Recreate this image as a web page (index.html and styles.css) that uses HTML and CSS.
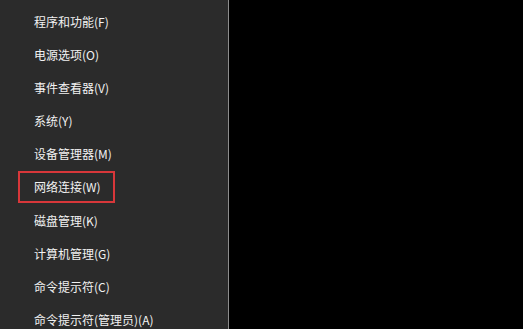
FILE: index.html
```html
<!DOCTYPE html>
<html lang="zh-CN">
<head>
<meta charset="utf-8">
<title>菜单</title>
<link rel="stylesheet" href="styles.css">
</head>
<body>
<div class="screen">
  <nav class="panel">
    <ul class="menu">
      <li class="item"><span class="label">程序和功能(F)</span></li>
      <li class="item"><span class="label">电源选项(O)</span></li>
      <li class="item"><span class="label">事件查看器(V)</span></li>
      <li class="item"><span class="label">系统(Y)</span></li>
      <li class="item"><span class="label">设备管理器(M)</span></li>
      <li class="item selected"><span class="label">网络连接(W)</span></li>
      <li class="item"><span class="label">磁盘管理(K)</span></li>
      <li class="item"><span class="label">计算机管理(G)</span></li>
      <li class="item"><span class="label">命令提示符(C)</span></li>
      <li class="item"><span class="label">命令提示符(管理员)(A)</span></li>
    </ul>
  </nav>
  <div class="desktop"></div>
</div>
</body>
</html>
```
FILE: styles.css
```css
html, body {
  margin: 0;
  padding: 0;
  background: #000;
}
.screen {
  display: flex;
  width: 523px;
  height: 329px;
  overflow: hidden;
}
.panel {
  width: 228px;
  height: 329px;
  background: #2b2b2b;
  border-right: 1px solid #8c8c8c;
  flex: none;
}
.desktop {
  flex: 1;
  background: #000;
}
.menu {
  list-style: none;
  margin: 0;
  padding: 5px 0 0 0;
}
.item {
  height: 33.1px;
  display: flex;
  align-items: center;
  padding-left: 34px;
  font-family: "Noto Sans CJK SC", "Noto Sans", sans-serif;
  font-size: 12px;
  color: #f2f2f2;
}
.label {
  white-space: nowrap;
}
.selected .label {
  display: inline-block;
  margin-left: -16px;
  padding: 0 12px 0 14px;
  border: 2px solid #d8373a;
  height: 28px;
  line-height: 28px;
}
```
